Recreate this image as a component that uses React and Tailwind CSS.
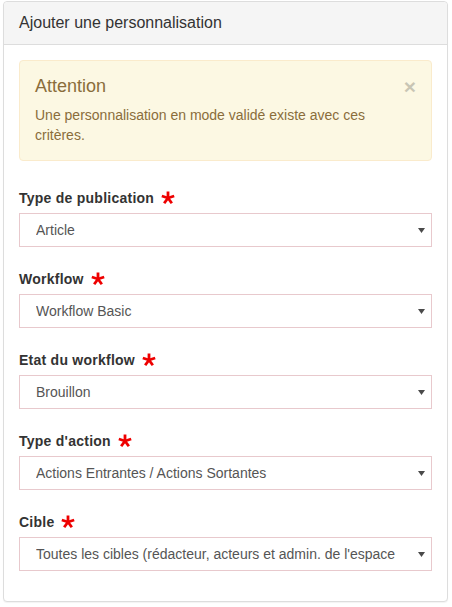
import React from 'react';

// Champs du formulaire, dans l'ordre d'affichage.
const FIELDS = [
  { label: 'Type de publication', value: 'Article' },
  { label: 'Workflow', value: 'Workflow Basic' },
  { label: 'Etat du workflow', value: 'Brouillon' },
  { label: "Type d'action", value: 'Actions Entrantes / Actions Sortantes' },
  {
    label: 'Cible',
    value: "Toutes les cibles (rédacteur, acteurs et admin. de l'espace de travail)",
  },
];

function Required() {
  // 5-branch asterisk, red like the reference
  const arms = [-90, -18, 54, 126, 198];
  return (
    <svg width="14" height="14" viewBox="-7 -7 14 14" className="ml-[7px] shrink-0">
      {arms.map((a) => {
        const r = (a * Math.PI) / 180;
        return (
          <line
            key={a}
            x1="0"
            y1="0"
            x2={(6.5 * Math.cos(r)).toFixed(2)}
            y2={(6.5 * Math.sin(r)).toFixed(2)}
            stroke="#ee0000"
            strokeWidth="2.8"
          />
        );
      })}
    </svg>
  );
}

function FakeSelect({ value }) {
  return (
    <div className="flex items-center h-[34px] border border-[#e8c9cd] bg-white pl-4 pr-[6px]">
      <span className="flex-1 overflow-hidden whitespace-nowrap text-[14px] text-[#555]">
        {value}
      </span>
      <svg width="7" height="5" viewBox="0 0 7 5" className="ml-[22px] shrink-0">
        <path d="M0 0 H7 L3.5 5 Z" fill="#4a4a4a" />
      </svg>
    </div>
  );
}

export default function App() {
  return (
    <div className="min-h-[607px] bg-white px-[3px] pt-px font-['Liberation_Sans',Arial,sans-serif] text-[#333]">
      <div className="w-[445px] rounded border border-[#ddd] bg-white shadow-[0_1px_1px_rgba(0,0,0,0.05)]">
        {/* Header */}
        <div className="rounded-t border-b border-[#ddd] bg-[#f5f5f5] px-[15px] py-[10px] text-[16px] leading-[22px]">
          Ajouter une personnalisation
        </div>

        <div className="px-[15px] pt-[15px] pb-[30px]">
          {/* Alert */}
          <div className="relative rounded border border-[#faebcc] bg-[#fcf8e3] pl-[15px] pr-[35px] py-[15px] text-[#8a6d3b]">
            <div className="text-[18px] leading-[20px] mb-[9px]">Attention</div>
            <p className="text-[14px] leading-[20px]">
              Une personnalisation en mode validé existe avec ces critères.
            </p>
            <span className="absolute right-[15px] top-[15px] text-[21px] font-bold leading-[21px] text-black opacity-20">
              ×
            </span>
          </div>

          <div className="mt-[27px] flex flex-col gap-[22px]">
            {FIELDS.map((f) => (
              <div key={f.label}>
                <div className="mb-[5px] flex items-center h-[20px] text-[14px] font-bold leading-[20px] tracking-[0.25px] text-[#333]">
                  {f.label}
                  <Required />
                </div>
                <FakeSelect value={f.value} />
              </div>
            ))}
          </div>
        </div>
      </div>
    </div>
  );
}
